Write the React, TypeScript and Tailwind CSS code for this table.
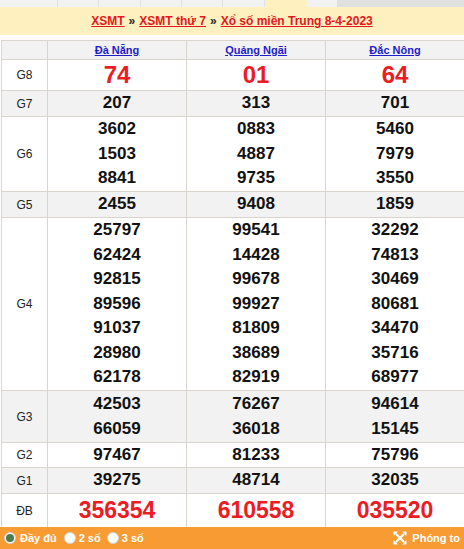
const ROWS = [
  { label: "G8", big: true, bg: false, h: "h-[31px]", lines: [["74"], ["01"], ["64"]] },
  { label: "G7", bg: true, h: "h-[26px]", lines: [["207"], ["313"], ["701"]] },
  { label: "G6", bg: false, h: "h-[75px]", lines: [["3602", "1503", "8841"], ["0883", "4887", "9735"], ["5460", "7979", "3550"]] },
  { label: "G5", bg: true, h: "h-[26px]", lines: [["2455"], ["9408"], ["1859"]] },
  {
    label: "G4",
    bg: false,
    h: "h-[173px]",
    lines: [
      ["25797", "62424", "92815", "89596", "91037", "28980", "62178"],
      ["99541", "14428", "99678", "99927", "81809", "38689", "82919"],
      ["32292", "74813", "30469", "80681", "34470", "35716", "68977"],
    ],
  },
  { label: "G3", bg: true, h: "h-[52px]", lines: [["42503", "66059"], ["76267", "36018"], ["94614", "15145"]] },
  { label: "G2", bg: false, h: "h-[25px]", lines: [["97467"], ["81233"], ["75796"]] },
  { label: "G1", bg: true, h: "h-[26px]", lines: [["39275"], ["48714"], ["32035"]] },
];

const PROVINCES = ["Đà Nẵng", "Quảng Ngãi", "Đắc Nông"];
const SPECIAL = ["356354", "610558", "035520"];

function Tabs() {
  const widths = ["w-[58px]", "w-[41px]", "w-[42px]", "w-[41px]", "w-[41px]", "w-[42px]"];
  return (
    <div className="flex h-[7px] bg-[#e0e0e0]">
      {widths.map((w, i) => (
        <div key={i} className={`${w} h-full bg-[#f2f2f2] border-r border-[#e2e2e2]`} />
      ))}
      <div className="w-[42px] h-full bg-[#fff1bf]" />
      <div className="w-[30px] h-full bg-[#f2f2f2]" />
    </div>
  );
}

function ExpandIcon() {
  return (
    <svg width="14" height="14" viewBox="0 0 14 14" fill="none">
      <path d="M3 3 L11 11 M11 3 L3 11" stroke="white" strokeWidth="2.2" />
      <path d="M0.5 0.5 H5 L0.5 5 Z M13.5 0.5 H9 L13.5 5 Z M0.5 13.5 H5 L0.5 9 Z M13.5 13.5 H9 L13.5 9 Z" fill="white" />
    </svg>
  );
}

function Radio({ on }: { on?: boolean }) {
  return (
    <span className="w-[12px] h-[12px] rounded-full bg-white border border-[#d0d0d0] flex items-center justify-center">
      {on && <span className="w-[8px] h-[8px] rounded-full bg-[#4d7a4f]" />}
    </span>
  );
}

export default function App() {
  return (
    <div className="w-[464px] h-[549px] overflow-hidden bg-white" style={{ fontFamily: '"Liberation Sans", Arial, sans-serif' }}>
      <Tabs />
      <div className="h-[28px] bg-[#fff1bf] flex items-center justify-center text-[12px] font-bold text-[#222]">
        <a className="text-[#e4161d] underline">XSMT</a>
        <span className="mx-[4px]">»</span>
        <a className="text-[#e4161d] underline">XSMT thứ 7</a>
        <span className="mx-[4px]">»</span>
        <a className="text-[#e4161d] underline">Xổ số miền Trung 8-4-2023</a>
      </div>
      <div className="h-[5px]" />

      <div className="ml-px w-[464px] border-t border-l border-[#d9d4cd] text-[#111]">
        <div className="flex h-[19px] bg-[#f2f2f2] border-b border-[#d9d4cd]">
          <div className="w-[46px] border-r border-[#d9d4cd]" />
          {PROVINCES.map((p) => (
            <div key={p} className="w-[139px] border-r border-[#d9d4cd] flex items-center justify-center">
              <a className="text-[11px] font-bold text-[#1e1ec8] underline">{p}</a>
            </div>
          ))}
        </div>

        {ROWS.map((r) => (
          <div key={r.label} className={`flex ${r.h} border-b border-[#d9d4cd] ${r.bg ? "bg-[#f2f2f2]" : "bg-white"}`}>
            <div className="w-[46px] border-r border-[#d9d4cd] flex items-center justify-center text-[12px] text-[#222]">
              {r.label}
            </div>
            {r.lines.map((col, ci) => (
              <div key={ci} className="w-[139px] border-r border-[#d9d4cd] flex flex-col items-center justify-center">
                {col.map((n, ni) =>
                  r.big ? (
                    <div key={ni} className="text-[24px] leading-[28px] font-bold text-[#ec1c24]">{n}</div>
                  ) : (
                    <div key={ni} className="text-[17px] leading-[24.6px] font-bold">{n}</div>
                  )
                )}
              </div>
            ))}
          </div>
        ))}

        <div className="flex h-[33px] bg-white">
          <div className="w-[46px] border-r border-[#d9d4cd] flex items-center justify-center text-[12px] text-[#222]">ĐB</div>
          {SPECIAL.map((n) => (
            <div key={n} className="w-[139px] border-r border-[#d9d4cd] flex items-center justify-center text-[23px] font-bold text-[#ec1c24]">
              {n}
            </div>
          ))}
        </div>
      </div>

      <div className="h-[22px] bg-[#f89b33] flex items-center justify-between pl-[4px] pr-[4px] text-white text-[11px] font-bold">
        <div className="flex items-center">
          <Radio on />
          <span className="ml-[4px] mr-[7px]">Đầy đủ</span>
          <Radio />
          <span className="ml-[3px] mr-[6px]">2 số</span>
          <Radio />
          <span className="ml-[3px]">3 số</span>
        </div>
        <div className="flex items-center gap-[5px]">
          <ExpandIcon />
          <span>Phóng to</span>
        </div>
      </div>
    </div>
  );
}
